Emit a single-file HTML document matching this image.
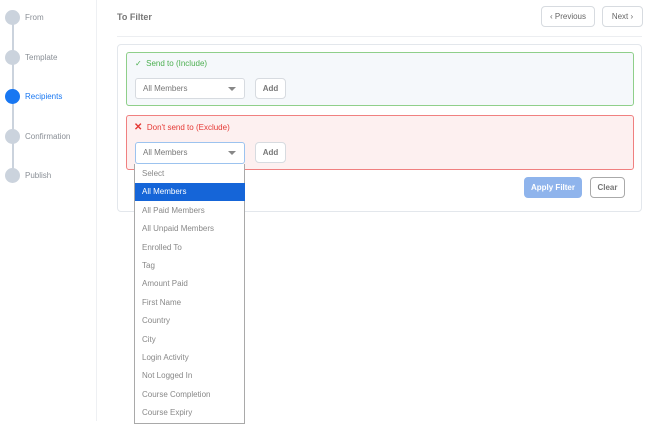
<!DOCTYPE html>
<html><head><meta charset="utf-8"><style>
*{box-sizing:border-box;margin:0;padding:0}
body{width:650px;height:421px;background:#fff;font-family:"Liberation Sans",sans-serif;position:relative;overflow:hidden;font-size:8px;color:#666}
.a{position:absolute}
.side{left:0;top:0;width:97px;height:421px;border-right:1px solid #eef0f3}
.vl{left:12px;top:17px;width:2px;height:158px;background:#cbd3dd}
.dot{width:15px;height:15px;border-radius:50%;background:#cbd3dd;left:5px}
.lbl{left:25px;font-size:8px;color:#8a8f96}
.btn{border:1px solid #d7dbe0;border-radius:4px;background:#fff;font-size:8px;color:#777;text-align:center;font-weight:bold}
.sel{background:#fff;border:1px solid #d7dbe0;border-radius:3px;font-size:8px;color:#777;padding-left:7px}
.sel:after{content:"";position:absolute;right:8px;top:8px;border:4px solid transparent;border-top:4px solid #888;}
.it{left:0;width:110px;height:18.4px;line-height:18.4px;padding-left:7px;color:#888;font-size:8px}
</style></head><body>
<div class="a side"></div>
<div class="a vl"></div>
<div class="a dot" style="top:10px"></div><div class="a lbl" style="top:13px">From</div>
<div class="a dot" style="top:50px"></div><div class="a lbl" style="top:53px">Template</div>
<div class="a dot" style="top:89px;background:#1877f2"></div><div class="a lbl" style="top:92px;color:#1877f2">Recipients</div>
<div class="a dot" style="top:129px"></div><div class="a lbl" style="top:132px">Confirmation</div>
<div class="a dot" style="top:168px"></div><div class="a lbl" style="top:171px">Publish</div>

<div class="a" style="left:117px;top:12px;font-size:9px;font-weight:bold;color:#777">To Filter</div>
<div class="a" style="left:117px;top:36px;width:525px;height:1px;background:#eceef1"></div>
<div class="a btn" style="left:541px;top:6px;width:54px;height:21px;line-height:19px;font-weight:normal;color:#666">‹ Previous</div>
<div class="a btn" style="left:602px;top:6px;width:41px;height:21px;line-height:19px;font-weight:normal;color:#666">Next ›</div>

<div class="a" style="left:117px;top:44px;width:525px;height:168px;border:1px solid #e3e7ec;border-radius:4px"></div>
<div class="a" style="left:126px;top:52px;width:508px;height:54px;border:1px solid #8fcf8a;border-radius:3px;background:#f5f8fb"></div>
<div class="a" style="left:135px;top:59px;font-size:8px;color:#4caf50">✓ &nbsp;Send to (Include)</div>
<div class="a sel" style="left:135px;top:78px;width:110px;height:21px;line-height:19px">All Members</div>
<div class="a btn" style="left:255px;top:78px;width:31px;height:21px;line-height:19px">Add</div>

<div class="a" style="left:126px;top:115px;width:508px;height:55px;border:1px solid #f08080;border-radius:3px;background:#fdf0f0"></div>
<div class="a" style="left:134px;top:122px;font-size:8px;color:#e53935"><b style="font-size:10px">✕</b> &nbsp;Don't send to (Exclude)</div>
<div class="a sel" style="left:135px;top:142px;width:110px;height:22px;line-height:20px;border-color:#9cc3ef">All Members</div>
<div class="a btn" style="left:255px;top:142px;width:31px;height:21px;line-height:19px">Add</div>

<div class="a btn" style="left:524px;top:177px;width:58px;height:21px;line-height:21px;background:#8fb4ec;border:none;color:#fff">Apply Filter</div>
<div class="a btn" style="left:590px;top:177px;width:35px;height:21px;line-height:19px;border-color:#aaa">Clear</div>

<div class="a" style="left:134px;top:164px;width:111px;height:260px;background:#fff;border:1px solid #a9a9a9;border-top:none">
<div class="a it" style="top:1px">Select</div>
<div class="a it" style="top:19px;background:#1565d8;color:#fff">All Members</div>
<div class="a it" style="top:37.8px">All Paid Members</div>
<div class="a it" style="top:56.2px">All Unpaid Members</div>
<div class="a it" style="top:74.6px">Enrolled To</div>
<div class="a it" style="top:93px">Tag</div>
<div class="a it" style="top:111.4px">Amount Paid</div>
<div class="a it" style="top:129.8px">First Name</div>
<div class="a it" style="top:148.2px">Country</div>
<div class="a it" style="top:166.6px">City</div>
<div class="a it" style="top:185px">Login Activity</div>
<div class="a it" style="top:203.4px">Not Logged In</div>
<div class="a it" style="top:221.8px">Course Completion</div>
<div class="a it" style="top:240.2px">Course Expiry</div>
</div>
</body></html>
